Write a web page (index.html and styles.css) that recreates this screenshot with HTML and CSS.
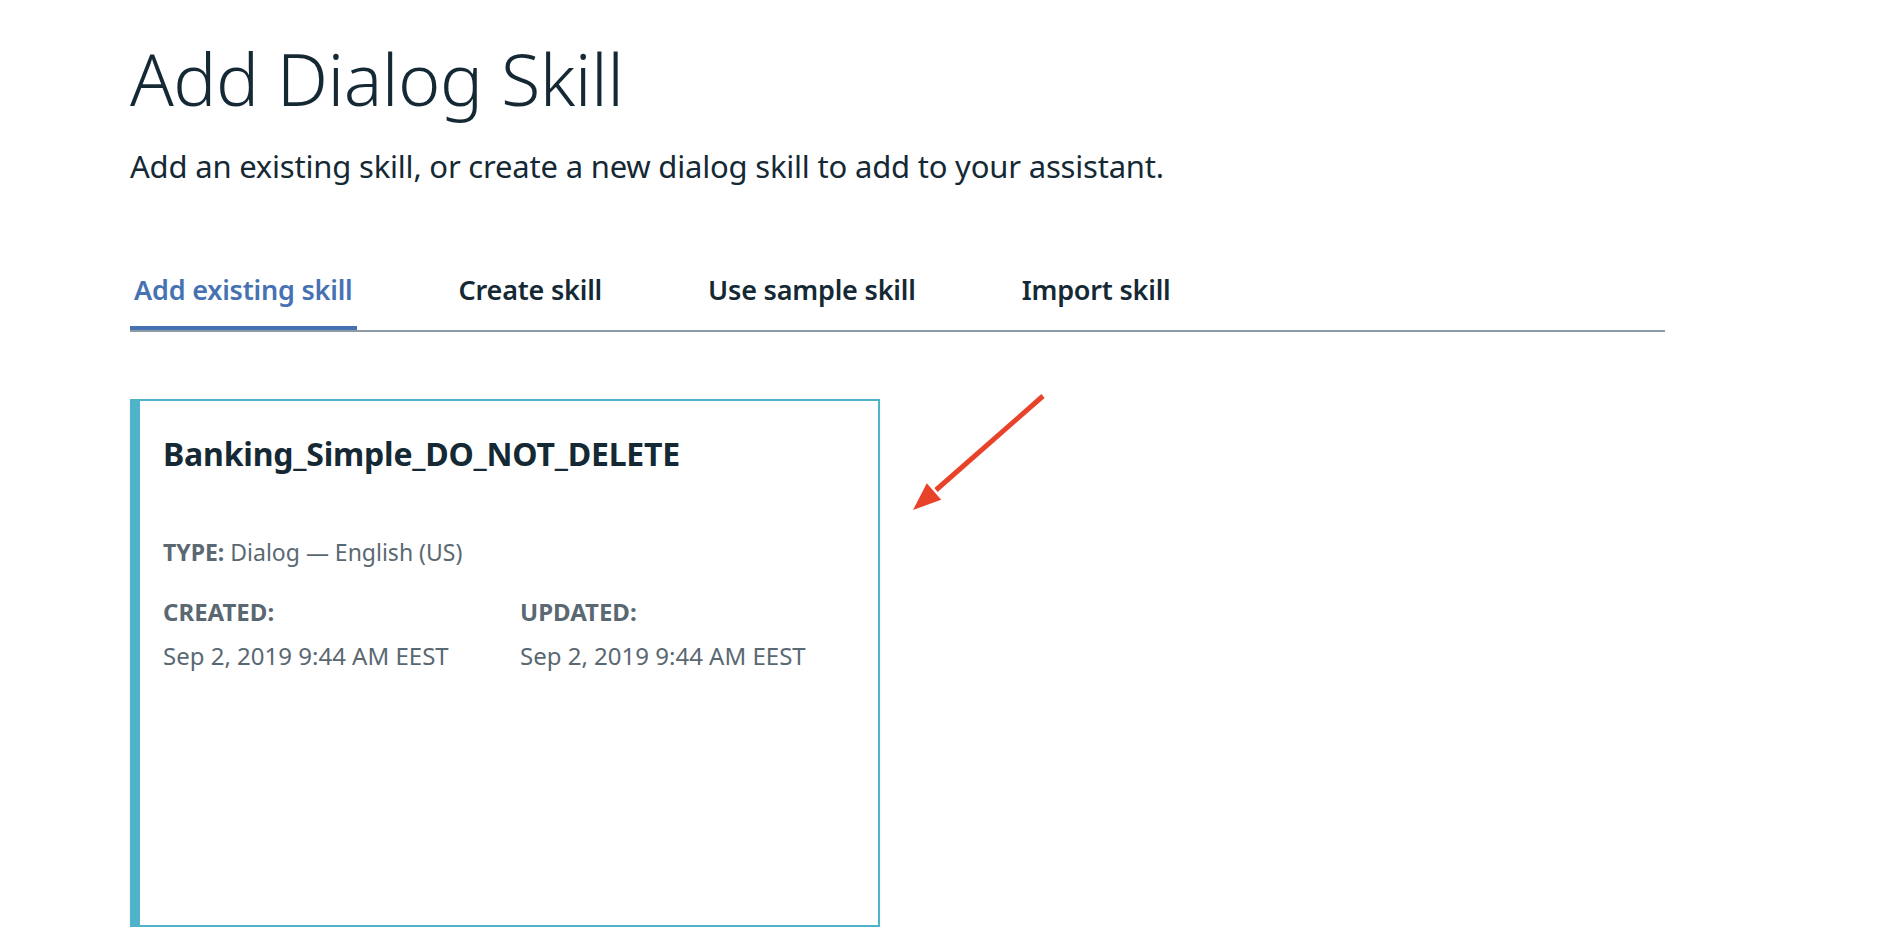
FILE: index.html
```html
<!DOCTYPE html>
<html lang="en">
<head>
<meta charset="utf-8">
<title>Add Dialog Skill</title>
<link rel="stylesheet" href="styles.css">
</head>
<body>
<main class="page">
  <h1 class="title">Add Dialog Skill</h1>
  <p class="subtitle">Add an existing skill, or create a new dialog skill to add to your assistant.</p>
  <nav class="tabs">
    <a class="tab tab-active">Add existing skill</a>
    <a class="tab">Create skill</a>
    <a class="tab">Use sample skill</a>
    <a class="tab">Import skill</a>
  </nav>
  <div class="content">
    <section class="card">
      <h2 class="card-title">Banking_Simple_DO_NOT_DELETE</h2>
      <p class="card-type"><span class="label">TYPE:</span> Dialog — English (US)</p>
      <div class="dates">
        <div class="date-col">
          <div class="label">CREATED:</div>
          <div class="date">Sep 2, 2019 9:44 AM EEST</div>
        </div>
        <div class="date-col">
          <div class="label">UPDATED:</div>
          <div class="date">Sep 2, 2019 9:44 AM EEST</div>
        </div>
      </div>
    </section>
    <svg class="arrow" width="160" height="140" viewBox="0 0 160 140">
      <line x1="143" y1="10" x2="36" y2="104" stroke="#e8432a" stroke-width="5"/>
      <polygon points="13,124 26.8,97.2 41.2,113.8" fill="#e8432a"/>
    </svg>
  </div>
</main>
</body>
</html>
```
FILE: styles.css
```css
* { box-sizing: border-box; }
body {
  margin: 0;
  background: #ffffff;
  font-family: "Noto Sans", "Open Sans", sans-serif;
  color: #152935;
}
.page {
  padding: 36px 0 0 130px;
}
.title {
  margin: 0;
  font-size: 72px;
  font-weight: 300;
  line-height: 84px;
  letter-spacing: -0.5px;
}
.subtitle {
  margin: 26px 0 0 0;
  font-size: 31px;
  line-height: 40px;
  font-weight: 400;
  letter-spacing: -0.2px;
}
.tabs {
  display: flex;
  gap: 98px;
  width: 1535px;
  margin-top: 82px;
  border-bottom: 2px solid #8c9ba5;
}
.tab {
  padding: 2px 4px 16px 4px;
  font-size: 27px;
  line-height: 40px;
  font-weight: 600;
  color: #152935;
  border-bottom: 4px solid transparent;
  letter-spacing: -0.2px;
}
.tab-active {
  color: #4672b3;
  border-bottom-color: #4672b3;
}
.content {
  display: flex;
  margin-top: 67px;
}
.card {
  flex: none;
  width: 750px;
  height: 528px;
  border: 2px solid #4fb3c9;
  border-left: 10px solid #4fb3c9;
  padding: 31px 23px 0 23px;
  box-shadow: 0 2px 3px rgba(0, 0, 0, 0.08);
}
.card-title {
  margin: 0;
  font-size: 32px;
  line-height: 44px;
  font-weight: 700;
  letter-spacing: -0.2px;
}
.card-type {
  margin: 60px 0 0 0;
  font-size: 23px;
  line-height: 32px;
  color: #5a6872;
}
.label {
  font-weight: 700;
  color: #5a6872;
}
.dates {
  display: grid;
  grid-template-columns: 357px 1fr;
  margin-top: 28px;
  font-size: 24px;
}
.date-col .label {
  line-height: 32px;
}
.date {
  margin-top: 12px;
  line-height: 32px;
  color: #5a6872;
}
.arrow {
  flex: none;
  margin: -13px 0 0 20px;
}
```
